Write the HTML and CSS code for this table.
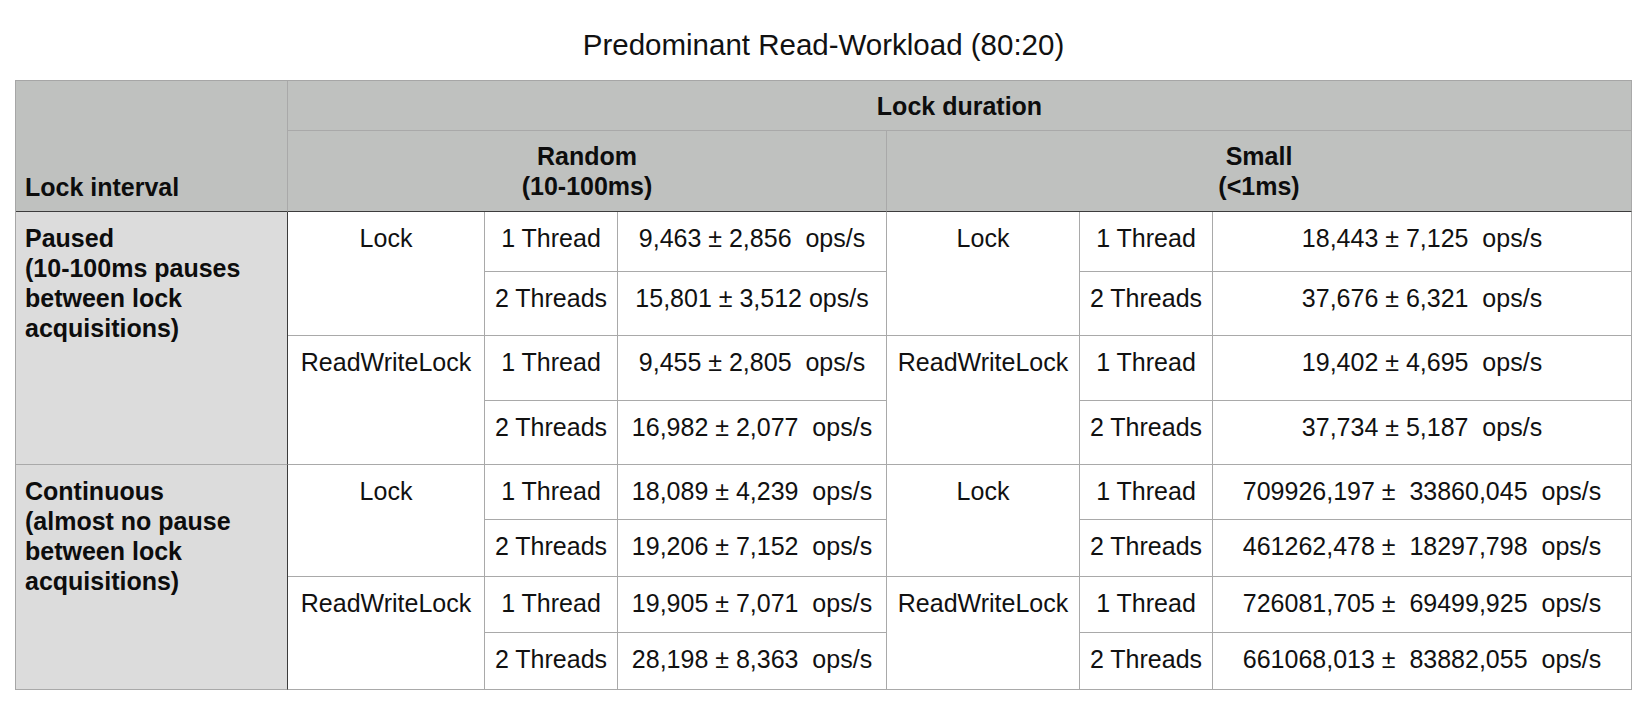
FILE: index.html
```html
<!DOCTYPE html>
<html lang="en">
<head>
<meta charset="utf-8">
<title>Predominant Read-Workload (80:20)</title>
<link rel="stylesheet" href="styles.css">
</head>
<body>
<div class="page">
  <h1 class="title">Predominant Read-Workload (80:20)</h1>
  <div class="grid" role="table">
    <div class="cell head corner">Lock interval</div>
    <div class="cell head span6">Lock duration</div>
    <div class="cell head sub span3">Random<br>(10-100ms)</div>
    <div class="cell head sub span3">Small<br>(&lt;1ms)</div>

    <div class="cell rowhead rspan4">Paused<br>(10-100ms pauses<br>between lock<br>acquisitions)</div>
    <div class="cell ctr rspan2">Lock</div>
    <div class="cell ctr">1 Thread</div>
    <div class="cell ctr val">9,463 ± 2,856  ops/s</div>
    <div class="cell ctr rspan2">Lock</div>
    <div class="cell ctr">1 Thread</div>
    <div class="cell ctr val">18,443 ± 7,125  ops/s</div>

    <div class="cell ctr">2 Threads</div>
    <div class="cell ctr val">15,801 ± 3,512 ops/s</div>
    <div class="cell ctr">2 Threads</div>
    <div class="cell ctr val">37,676 ± 6,321  ops/s</div>

    <div class="cell ctr rspan2">ReadWriteLock</div>
    <div class="cell ctr">1 Thread</div>
    <div class="cell ctr val">9,455 ± 2,805  ops/s</div>
    <div class="cell ctr rspan2">ReadWriteLock</div>
    <div class="cell ctr">1 Thread</div>
    <div class="cell ctr val">19,402 ± 4,695  ops/s</div>

    <div class="cell ctr">2 Threads</div>
    <div class="cell ctr val">16,982 ± 2,077  ops/s</div>
    <div class="cell ctr">2 Threads</div>
    <div class="cell ctr val">37,734 ± 5,187  ops/s</div>

    <div class="cell rowhead rspan4">Continuous<br>(almost no pause<br>between lock<br>acquisitions)</div>
    <div class="cell ctr rspan2">Lock</div>
    <div class="cell ctr">1 Thread</div>
    <div class="cell ctr val">18,089 ± 4,239  ops/s</div>
    <div class="cell ctr rspan2">Lock</div>
    <div class="cell ctr">1 Thread</div>
    <div class="cell ctr val">709926,197 ±  33860,045  ops/s</div>

    <div class="cell ctr">2 Threads</div>
    <div class="cell ctr val">19,206 ± 7,152  ops/s</div>
    <div class="cell ctr">2 Threads</div>
    <div class="cell ctr val">461262,478 ±  18297,798  ops/s</div>

    <div class="cell ctr rspan2">ReadWriteLock</div>
    <div class="cell ctr">1 Thread</div>
    <div class="cell ctr val">19,905 ± 7,071  ops/s</div>
    <div class="cell ctr rspan2">ReadWriteLock</div>
    <div class="cell ctr">1 Thread</div>
    <div class="cell ctr val">726081,705 ±  69499,925  ops/s</div>

    <div class="cell ctr">2 Threads</div>
    <div class="cell ctr val">28,198 ± 8,363  ops/s</div>
    <div class="cell ctr">2 Threads</div>
    <div class="cell ctr val">661068,013 ±  83882,055  ops/s</div>
  </div>
</div>
</body>
</html>
```

FILE: styles.css
```css
* {
  box-sizing: border-box;
}

html, body {
  margin: 0;
  padding: 0;
  background: #ffffff;
}

body {
  font-family: "Liberation Sans", Arial, Helvetica, sans-serif;
  color: #111111;
}

.page {
  padding: 27px 0 0 15px;
  width: 1632px;
}

.title {
  margin: 0 0 17px 0;
  width: 1617px;
  text-align: center;
  font-weight: normal;
  font-size: 29.5px;
  line-height: 36px;
  color: #111111;
}

.grid {
  display: grid;
  width: 1617px;
  grid-template-columns: 272px 197px 133px 269px 193px 133px 419px;
  grid-template-rows: 50px 81px 60px 64px 65px 64px 55px 57px 56px 57px;
  border-left: 1px solid #a6a6a6;
  border-top: 1px solid #a6a6a6;
  font-size: 25px;
  line-height: 30px;
}

.cell {
  border-right: 1px solid #a9a9a9;
  border-bottom: 1px solid #a9a9a9;
  padding-top: 11px;
  background: #ffffff;
}

.head {
  background: #bfc1bf;
  font-weight: bold;
  display: flex;
  align-items: center;
  justify-content: center;
  text-align: center;
  padding-top: 0;
  color: #0d0d0d;
}

.corner {
  grid-row: span 2;
  justify-content: flex-start;
  align-items: flex-end;
  text-align: left;
  padding: 0 10px 9px 9px;
  border-bottom-color: #3c3c3c;
}

.span6 {
  grid-column: span 6;
}

.span3 {
  grid-column: span 3;
}

.sub {
  border-bottom-color: #3c3c3c;
}

.rowhead {
  grid-row: span 4;
  background: #dcdcdc;
  font-weight: bold;
  padding-left: 9px;
  border-right-color: #3c3c3c;
  color: #0d0d0d;
}

.rspan2 {
  grid-row: span 2;
}

.ctr {
  text-align: center;
}

.val {
  white-space: pre;
}
```
